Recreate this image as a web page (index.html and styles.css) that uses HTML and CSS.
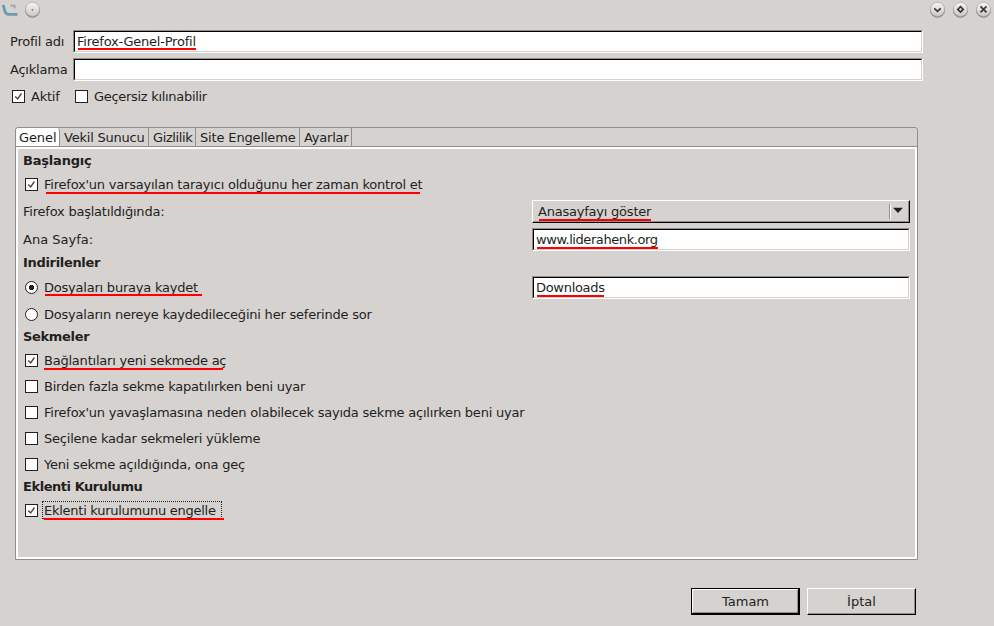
FILE: index.html
```html
<!DOCTYPE html>
<html lang="tr">
<head>
<meta charset="utf-8">
<title>Profil</title>
<link rel="stylesheet" href="styles.css">
</head>
<body>
<svg class="defs" width="0" height="0">
  <defs>
    <linearGradient id="knob" x1="0" y1="0" x2="0" y2="1"><stop offset="0" stop-color="#f6f5f4"/><stop offset="1" stop-color="#cbc8c5"/></linearGradient>
    <g id="button"><circle cx="8.5" cy="9.2" r="7.5" fill="#77736f" opacity=".75"/><circle cx="8.5" cy="8.3" r="7.1" fill="url(#knob)" stroke="#a19d9a" stroke-width=".6"/></g>
  </defs>
</svg>
<header class="titlebar">
  <svg class="logo" width="18" height="18" viewBox="0 0 18 18"><path d="M2.2 4 4.1 10.8Q5 13.4 8 13.4H16.5" fill="none" stroke="#699bb5" stroke-width="2.8"/><path d="M9.5 4.6H13.6V7.5" fill="none" stroke="#93a7b2" stroke-width="1.8"/></svg>
  <svg width="17" height="18"><use href="#button"/><circle cx="8.5" cy="8.8" r=".9" fill="#777"/></svg>
  <span class="space"></span>
  <svg width="17" height="18"><use href="#button"/><path d="M5.3 7.3 8.5 10.3 11.7 7.3" class="glyph"/></svg>
  <svg width="17" height="18"><use href="#button"/><path d="M8.5 5.7 11.2 8.4 8.5 11.1 5.8 8.4Z" class="glyph"/></svg>
  <svg width="17" height="18"><use href="#button"/><path d="M5.5 5.3 11.5 11.3M11.5 5.3 5.5 11.3" class="glyph"/></svg>
</header>
<main>
  <div class="field"><span class="name">Profil adı</span><div class="input"><div><span class="mark m-profile">Firefox-Genel-Profil</span></div></div></div>
  <div class="field"><span class="name">Açıklama</span><div class="input"><div></div></div></div>
  <div class="flags">
    <label><i class="box on"><svg viewBox="0 0 11 11"><path d="M2.2 5.5 4.7 8 8.4 2.5"/></svg></i><span>Aktif</span></label>
    <label><i class="box"></i><span class="tight">Geçersiz kılınabilir</span></label>
  </div>
  <section class="notebook">
    <nav><span class="tab active">Genel</span><span class="tab t2">Vekil Sunucu</span><span class="tab t3">Gizlilik</span><span class="tab t4">Site Engelleme</span><span class="tab t5">Ayarlar</span></nav>
    <div class="panel">
      <h2 class="h23">Başlangıç</h2>
      <label class="row"><i class="box on"><svg viewBox="0 0 11 11"><path d="M2.2 5.5 4.7 8 8.4 2.5"/></svg></i><span class="mark m-default">Firefox'un varsayılan tarayıcı olduğunu her zaman kontrol et</span></label>
      <div class="row pair first"><span class="caption">Firefox başlatıldığında:</span><div class="select"><span class="mark m-start">Anasayfayı göster</span><i class="sep"></i><svg width="10" height="8"><path d="M0 .7H10L5 6Z"/></svg></div></div>
      <div class="row pair second"><span class="caption loose">Ana Sayfa:</span><div class="input"><div><span class="mark m-home">www.liderahenk.org</span></div></div></div>
      <h2 class="h24">Indirilenler</h2>
      <div class="row pair third"><label class="caption"><i class="radio on"></i><span class="mark m-save">Dosyaları buraya kaydet</span></label><div class="input"><div><span class="mark m-down">Downloads</span></div></div></div>
      <label class="row ask"><i class="radio"></i><span>Dosyaların nereye kaydedileceğini her seferinde sor</span></label>
      <h2 class="h20">Sekmeler</h2>
      <label class="row"><i class="box on"><svg viewBox="0 0 11 11"><path d="M2.2 5.5 4.7 8 8.4 2.5"/></svg></i><span class="mark m-links">Bağlantıları yeni sekmede aç</span></label>
      <label class="row"><i class="box"></i><span>Birden fazla sekme kapatılırken beni uyar</span></label>
      <label class="row"><i class="box"></i><span>Firefox'un yavaşlamasına neden olabilecek sayıda sekme açılırken beni uyar</span></label>
      <label class="row"><i class="box"></i><span>Seçilene kadar sekmeleri yükleme</span></label>
      <label class="row"><i class="box"></i><span>Yeni sekme açıldığında, ona geç</span></label>
      <h2 class="h18">Eklenti Kurulumu</h2>
      <label class="row"><i class="box on"><svg viewBox="0 0 11 11"><path d="M2.2 5.5 4.7 8 8.4 2.5"/></svg></i><span class="mark m-addon focus">Eklenti kurulumunu engelle</span></label>
    </div>
  </section>
  <footer><button class="default"><span>Tamam</span></button><button><span>İptal</span></button></footer>
</main>
</body>
</html>
```
FILE: styles.css
```css
*, ::before, ::after { box-sizing: border-box; }
body {
  margin: 0;
  width: 994px;
  height: 626px;
  overflow: hidden;
  background: #d6d2cf;
  color: #231f1e;
  font: 13px/16px "DejaVu Sans", sans-serif;
  letter-spacing: -0.22px;
  white-space: nowrap;
}
.defs { position: absolute; }
i { display: block; flex: none; }
.tight { letter-spacing: -0.3px; }
.loose { letter-spacing: 0; }
.titlebar { display: flex; height: 30px; padding: 1px 2px 0 1px; gap: 6px; }
.logo { margin-right: -1px; }
.space { flex: 1; }
.glyph { fill: none; stroke: #3b3735; stroke-width: 1.7; }

.field { display: flex; align-items: center; width: 923px; height: 23px; margin-bottom: 5px; padding-left: 10px; }
.name { width: 63px; }
.input { flex: 1; height: 23px; border: 1px solid; border-color: #938e8b #fff #fff #938e8b; }
.input > div {
  height: 21px;
  padding: 2px 0 0 2px;
  background: #fff;
  border: 1px solid;
  border-color: #000 #d6d2cf #d6d2cf #000;
}
.flags { display: flex; height: 25px; margin-top: -2px; padding-left: 12px; }
.flags label, .row { display: flex; align-items: center; }
.flags label:first-child { width: 63px; }
.box { position: relative; width: 13px; height: 13px; margin-right: 6px; border: 1px solid #231f1e; background: #fff; }
.box svg { display: block; width: 11px; height: 11px; }
.box path { fill: none; stroke: #4b4746; stroke-width: 1.4; }
.radio { width: 13px; height: 13px; margin-right: 6px; border: 1.3px solid #231f1e; border-radius: 50%; background: #fff; }
.radio.on { background: radial-gradient(circle, #231f1e 2.3px, #fff 3px); }

.notebook { width: 903px; height: 433px; margin: 18px 0 0 15px; border: 1px solid #938e8b; border-radius: 3px 3px 0 0; }
nav { display: flex; height: 18px; }
.tab { height: 18px; padding: 2px 0 0 4px; border-right: 1px solid #938e8b; }
.active { width: 44px; padding-left: 3px; background: #fff; border-radius: 3px 3px 0 0; letter-spacing: -0.1px; }
.t2 { width: 89px; }
.t3 { width: 47px; letter-spacing: -0.4px; }
.t4 { width: 104px; letter-spacing: -0.15px; }
.t5 { width: 52px; }
.panel { height: 412px; padding: 0 5px; border: 2px solid #fff; box-shadow: 0 -1px #938e8b; margin-top: 1px; }
h2 { display: flex; align-items: center; margin: 0; font-size: 13px; line-height: 16px; letter-spacing: -0.32px; }
.row { height: 25px; margin-bottom: 1px; padding-left: 2px; }
.h23 { height: 23px; letter-spacing: -0.2px; }
.h24 { height: 24px; }
.h20 { height: 20px; margin-bottom: 1px; }
.h18 { height: 18px; margin-bottom: 2px; letter-spacing: -0.45px; }
.pair { width: 887px; height: 23px; margin-bottom: 0; padding: 0; }
.first { margin-top: 3px; }
.second { margin-top: 5px; }
.third { margin-top: 1px; }
.ask { margin: 3px 0 0; }
.caption { display: flex; align-items: center; width: 509px; }
label.caption { padding-left: 2px; }
.select {
  display: flex;
  align-items: center;
  flex: 1;
  height: 23px;
  padding: 0 6px 0 5px;
  border: 1px solid;
  border-color: #fff #000 #000 #fff;
  box-shadow: inset -1px -1px #938e8b;
}
.select svg { margin-bottom: 1px; fill: #231f1e; }
.sep { width: 2px; height: 15px; margin: 0 2px 0 auto; border-left: 1px solid #938e8b; background: #fff; }

.mark { position: relative; display: inline-block; }
.mark::after { content: ""; position: absolute; height: 2px; background: #f00; }
.m-profile::after { left: 1px; top: 14px; width: 118px; }
.m-default::after { left: 2px; top: 15px; width: 374px; }
.m-start::after { left: 1px; top: 15px; width: 112px; }
.m-home { letter-spacing: -0.42px; }
.m-home::after { left: 1px; top: 15px; width: 121px; }
.m-down { letter-spacing: -0.3px; }
.m-down::after { left: 1px; top: 15px; width: 67px; }
.m-save::after { left: 1px; top: 14px; width: 157px; }
.m-links::after { left: 0; top: 15px; width: 179px; }
.m-addon::after { left: 0; top: 15px; width: 180px; }
.m-addon { letter-spacing: -0.26px; }
.focus::before { content: ""; position: absolute; left: -2px; top: -2px; width: 180px; height: 18px; border: 1px dotted #231f1e; }

footer { display: flex; gap: 7px; margin: 28px 0 0 691px; }
button {
  width: 109px;
  height: 27px;
  padding: 0;
  background: #d6d2cf;
  color: inherit;
  font: inherit;
  border: 1px solid;
  border-color: #fff #000 #000 #fff;
  box-shadow: inset -1px -1px #938e8b;
}
.default { border-color: #000; box-shadow: inset -1px -1px #000, inset 1px 1px #fff, inset -2px -2px #938e8b; }
```
